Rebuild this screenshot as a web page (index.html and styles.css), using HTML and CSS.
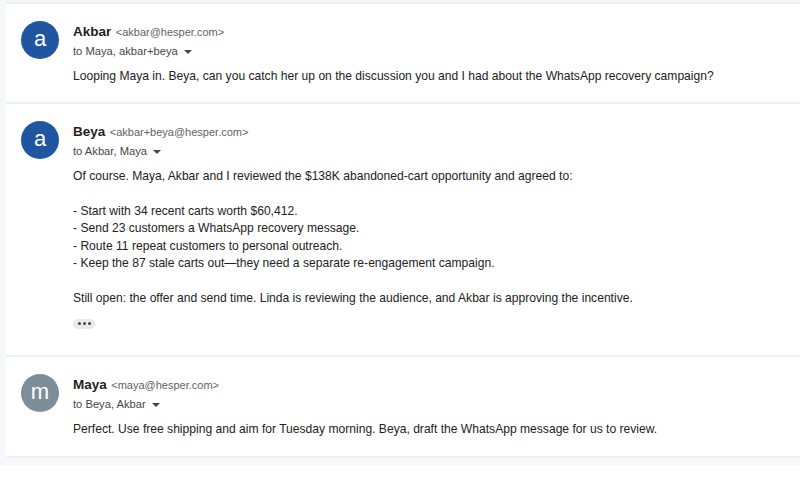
FILE: index.html
```html
<!DOCTYPE html>
<html>
<head>
<meta charset="utf-8">
<link rel="stylesheet" href="styles.css">
</head>
<body>
<div class="thread">
  <div class="msg">
    <div class="avatar blue">a</div>
    <div class="content">
      <div class="from"><span class="name">Akbar</span> <span class="email">&lt;akbar@hesper.com&gt;</span></div>
      <div class="to">to Maya, akbar+beya <span class="caret"></span></div>
      <div class="body">
        <p>Looping Maya in. Beya, can you catch her up on the discussion you and I had about the WhatsApp recovery campaign?</p>
      </div>
    </div>
  </div>
  <div class="msg">
    <div class="avatar blue">a</div>
    <div class="content">
      <div class="from"><span class="name">Beya</span> <span class="email">&lt;akbar+beya@hesper.com&gt;</span></div>
      <div class="to">to Akbar, Maya <span class="caret"></span></div>
      <div class="body">
        <p>Of course. Maya, Akbar and I reviewed the $138K abandoned-cart opportunity and agreed to:</p>
        <p>- Start with 34 recent carts worth $60,412.<br>- Send 23 customers a WhatsApp recovery message.<br>- Route 11 repeat customers to personal outreach.<br>- Keep the 87 stale carts out—they need a separate re-engagement campaign.</p>
        <p>Still open: the offer and send time. Linda is reviewing the audience, and Akbar is approving the incentive.</p>
      </div>
      <div class="more"><span></span><span></span><span></span></div>
    </div>
  </div>
  <div class="msg">
    <div class="avatar gray">m</div>
    <div class="content">
      <div class="from"><span class="name">Maya</span> <span class="email">&lt;maya@hesper.com&gt;</span></div>
      <div class="to">to Beya, Akbar <span class="caret"></span></div>
      <div class="body">
        <p>Perfect. Use free shipping and aim for Tuesday morning. Beya, draft the WhatsApp message for us to review.</p>
      </div>
    </div>
  </div>
</div>
</body>
</html>
```

FILE: styles.css
```css
html, body {
  margin: 0;
  padding: 0;
  background: #ffffff;
}
body {
  font-family: "Liberation Sans", Arial, sans-serif;
  color: #222222;
}
.thread {
  background: #f6f8fc;
  padding-left: 6px;
  padding-top: 2px;
  height: 465px;
  box-sizing: border-box;
}
.msg {
  background: #ffffff;
  border-top: 2px solid #eeeff1;
  display: flex;
  gap: 14px;
  padding: 17px 0 16px 15px;
}
.msg:last-child {
  border-bottom: 2px solid #eeeff1;
  padding-bottom: 18px;
}
.msg:nth-child(2) {
  padding-bottom: 26px;
}
.avatar {
  width: 38px;
  height: 38px;
  border-radius: 50%;
  color: #ffffff;
  font-size: 22px;
  line-height: 36px;
  text-align: center;
  flex: none;
}
.avatar.blue { background: #1f56a1; }
.avatar.gray { background: #7b8e9a; }
.content {
  flex: 1;
  min-width: 0;
}
.from {
  line-height: 19px;
  height: 19px;
}
.name {
  font-weight: bold;
  font-size: 13.5px;
  color: #1f1f1f;
}
.email {
  font-size: 11px;
  color: #5f6368;
}
.to {
  margin-top: 2px;
  font-size: 11.2px;
  line-height: 19px;
  color: #444746;
  display: flex;
  align-items: center;
  gap: 4px;
}
.caret {
  width: 0;
  height: 0;
  border-left: 4px solid transparent;
  border-right: 4px solid transparent;
  border-top: 4px solid #444746;
  margin-left: 2px;
  margin-top: 1px;
}
.body {
  margin-top: 7px;
  font-size: 12.1px;
  line-height: 17.5px;
  color: #222222;
}
.body p {
  margin: 0 0 17.5px 0;
}
.body p:last-child {
  margin-bottom: 0;
}
.more {
  margin-top: 11px;
  width: 22px;
  height: 10px;
  background: #e8eaed;
  border-radius: 5px;
  display: flex;
  align-items: center;
  justify-content: center;
  gap: 2px;
}
.more span {
  width: 3px;
  height: 3px;
  background: #444746;
  border-radius: 50%;
}
```
